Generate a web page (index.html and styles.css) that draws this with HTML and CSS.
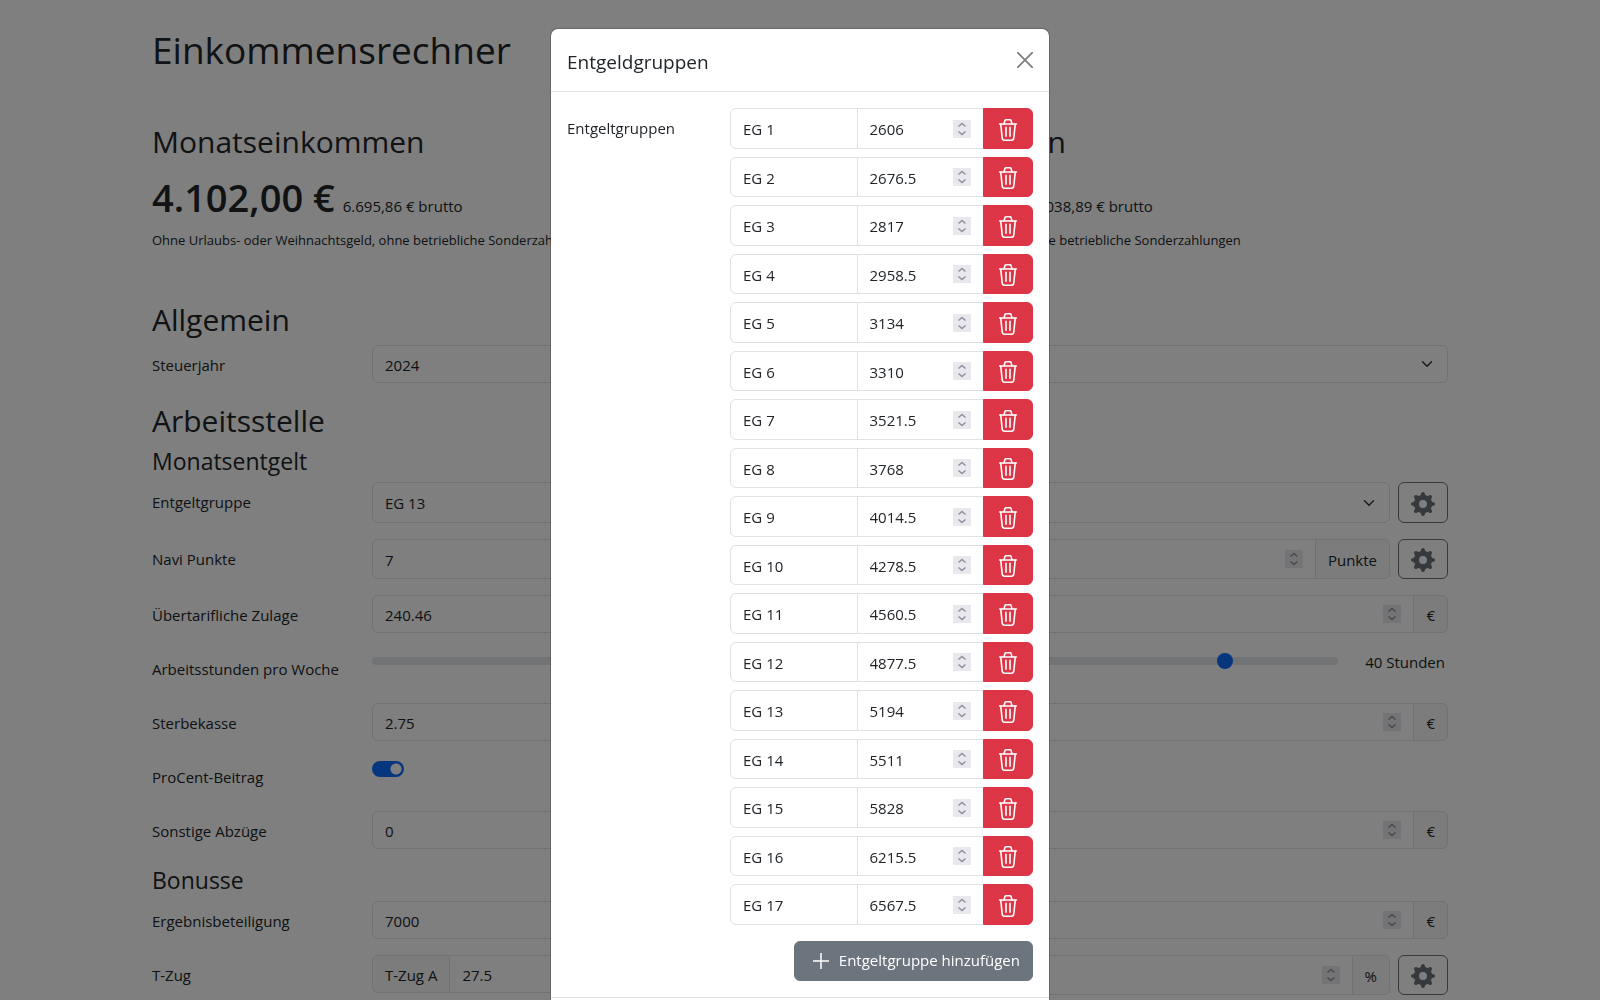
FILE: index.html
```
<!DOCTYPE html>
<html lang="de">
<head>
<meta charset="utf-8">
<meta name="viewport" content="width=device-width, initial-scale=1">
<title>Einkommensrechner</title>
<link rel="stylesheet" href="styles.css">
</head>
<body>
<svg class="sprite" aria-hidden="true">
  <symbol id="trash" viewBox="0 0 24 24">
    <g fill="none" stroke="currentColor" stroke-width="1.6" stroke-linecap="round" stroke-linejoin="round">
      <path d="M3.6 6h16.8"/>
      <path d="M8 5.8 9 2.4q.2-.7 1-.7h4q.8 0 1 .7L16 5.8"/>
      <path d="M4.8 6.4 6.2 20q.2 2.200 2.400 2.200h6.800q2.200 0 2.400-2.200L19.200 6.400"/>
      <path d="M10 9.200v9M14 9.200v9"/>
    </g>
  </symbol>
  <symbol id="gear" viewBox="-12 -12 24 24">
    <circle r="6.500" fill="none" stroke="currentColor" stroke-width="5"/>
    <g fill="currentColor">
      <path id="tooth" d="M-3.600-8Q-2-8.800-1.800-10.400Q-1.600-12 0-12T1.800-10.400Q2-8.800 3.600-8Z"/>
      <use href="#tooth" transform="rotate(45)"/><use href="#tooth" transform="rotate(90)"/>
      <use href="#tooth" transform="rotate(135)"/><use href="#tooth" transform="rotate(180)"/>
      <use href="#tooth" transform="rotate(225)"/><use href="#tooth" transform="rotate(270)"/>
      <use href="#tooth" transform="rotate(315)"/>
    </g>
  </symbol>
  <symbol id="plus" viewBox="0 0 24 24"><path d="M12 5v16M4 13h16" fill="none" stroke="currentColor" stroke-width="1.500"/></symbol>
  <symbol id="close" viewBox="0 0 16 16"><path d="M.7.7l14.600 14.600M15.300.7.7 15.300" fill="none" stroke="currentColor" stroke-width="1.800" stroke-linecap="round"/></symbol>
</svg>

<main class="container">
  <h1>Einkommensrechner</h1>
  <div class="summary">
    <section>
      <h2>Monatseinkommen</h2>
      <div class="amount"><strong>4.102,00 €</strong> <span>6.695,86 € brutto</span></div>
      <small>Ohne Urlaubs- oder Weihnachtsgeld, ohne betriebliche Sonderzahlungen</small>
    </section>
    <section>
      <h2>Jahreseinkommen</h2>
      <div class="amount"><strong>54.263,12 €</strong> <span>89.038,89 € brutto</span></div>
      <small>Mit Urlaubs- oder Weihnachtsgeld, ohne betriebliche Sonderzahlungen</small>
    </section>
  </div>

  <h2>Allgemein</h2>
  <div class="row">
    <label for="jahr">Steuerjahr</label>
    <select id="jahr" class="control select"><option>2024</option></select>
  </div>

  <h2>Arbeitsstelle</h2>
  <h3>Monatsentgelt</h3>
  <div class="row">
    <label for="eg">Entgeltgruppe</label>
    <div class="fields tall">
      <select id="eg" class="control select"><option>EG 13</option></select>
      <button type="button" class="btn gear" aria-label="Entgeltgruppen bearbeiten"><svg class="icon"><use href="#gear"/></svg></button>
    </div>
  </div>
  <div class="row">
    <label for="navi">Navi Punkte</label>
    <div class="fields mid">
      <div class="group"><input id="navi" class="control" type="number" value="7"><span class="addon">Punkte</span></div>
      <button type="button" class="btn gear" aria-label="Navi Punkte bearbeiten"><svg class="icon"><use href="#gear"/></svg></button>
    </div>
  </div>
  <div class="row">
    <label for="zulage">Übertarifliche Zulage</label>
    <div class="group"><input id="zulage" class="control" type="number" step="any" value="240.46"><span class="addon">€</span></div>
  </div>
  <div class="row">
    <label for="stunden">Arbeitsstunden pro Woche</label>
    <div class="slider"><input id="stunden" type="range" min="0" max="45" step="0.5" value="40"><output for="stunden">40 Stunden</output></div>
  </div>
  <div class="row">
    <label for="sterbe">Sterbekasse</label>
    <div class="group"><input id="sterbe" class="control" type="number" step="any" value="2.75"><span class="addon">€</span></div>
  </div>
  <div class="row">
    <label for="procent">ProCent-Beitrag</label>
    <input id="procent" class="switch" type="checkbox" role="switch" checked>
  </div>
  <div class="row">
    <label for="abzug">Sonstige Abzüge</label>
    <div class="group"><input id="abzug" class="control" type="number" value="0"><span class="addon">€</span></div>
  </div>

  <h3>Bonusse</h3>
  <div class="row">
    <label for="erfolg">Ergebnisbeteiligung</label>
    <div class="group"><input id="erfolg" class="control" type="number" value="7000"><span class="addon">€</span></div>
  </div>
  <div class="row">
    <label for="tzug">T-Zug</label>
    <div class="pair">
      <div class="group"><span class="addon">T-Zug A</span><input id="tzug" class="control" type="number" step="any" value="27.5"></div>
      <div class="fields mid">
        <div class="group"><input class="control" type="number" step="any" aria-label="T-Zug B"><span class="addon">%</span></div>
        <button type="button" class="btn gear" aria-label="T-Zug bearbeiten"><svg class="icon"><use href="#gear"/></svg></button>
      </div>
    </div>
  </div>
</main>

<div class="backdrop">
  <div class="modal" role="dialog" aria-modal="true" aria-labelledby="titel">
    <header class="modal-header">
      <h2 id="titel" class="modal-title">Entgeldgruppen</h2>
      <button type="button" class="close" aria-label="Schließen"><svg><use href="#close"/></svg></button>
    </header>
    <div class="modal-body">
      <span class="modal-label">Entgeltgruppen</span>
      <div class="groups">
        <div class="group"><input class="control" value="EG 1" aria-label="Name"><input class="control" type="number" value="2606" aria-label="Entgelt"><button type="button" class="btn delete" aria-label="Löschen"><svg class="icon"><use href="#trash"/></svg></button></div>
        <div class="group"><input class="control" value="EG 2" aria-label="Name"><input class="control" type="number" step="any" value="2676.5" aria-label="Entgelt"><button type="button" class="btn delete" aria-label="Löschen"><svg class="icon"><use href="#trash"/></svg></button></div>
        <div class="group"><input class="control" value="EG 3" aria-label="Name"><input class="control" type="number" value="2817" aria-label="Entgelt"><button type="button" class="btn delete" aria-label="Löschen"><svg class="icon"><use href="#trash"/></svg></button></div>
        <div class="group"><input class="control" value="EG 4" aria-label="Name"><input class="control" type="number" step="any" value="2958.5" aria-label="Entgelt"><button type="button" class="btn delete" aria-label="Löschen"><svg class="icon"><use href="#trash"/></svg></button></div>
        <div class="group"><input class="control" value="EG 5" aria-label="Name"><input class="control" type="number" value="3134" aria-label="Entgelt"><button type="button" class="btn delete" aria-label="Löschen"><svg class="icon"><use href="#trash"/></svg></button></div>
        <div class="group"><input class="control" value="EG 6" aria-label="Name"><input class="control" type="number" value="3310" aria-label="Entgelt"><button type="button" class="btn delete" aria-label="Löschen"><svg class="icon"><use href="#trash"/></svg></button></div>
        <div class="group"><input class="control" value="EG 7" aria-label="Name"><input class="control" type="number" step="any" value="3521.5" aria-label="Entgelt"><button type="button" class="btn delete" aria-label="Löschen"><svg class="icon"><use href="#trash"/></svg></button></div>
        <div class="group"><input class="control" value="EG 8" aria-label="Name"><input class="control" type="number" value="3768" aria-label="Entgelt"><button type="button" class="btn delete" aria-label="Löschen"><svg class="icon"><use href="#trash"/></svg></button></div>
        <div class="group"><input class="control" value="EG 9" aria-label="Name"><input class="control" type="number" step="any" value="4014.5" aria-label="Entgelt"><button type="button" class="btn delete" aria-label="Löschen"><svg class="icon"><use href="#trash"/></svg></button></div>
        <div class="group"><input class="control" value="EG 10" aria-label="Name"><input class="control" type="number" step="any" value="4278.5" aria-label="Entgelt"><button type="button" class="btn delete" aria-label="Löschen"><svg class="icon"><use href="#trash"/></svg></button></div>
        <div class="group"><input class="control" value="EG 11" aria-label="Name"><input class="control" type="number" step="any" value="4560.5" aria-label="Entgelt"><button type="button" class="btn delete" aria-label="Löschen"><svg class="icon"><use href="#trash"/></svg></button></div>
        <div class="group"><input class="control" value="EG 12" aria-label="Name"><input class="control" type="number" step="any" value="4877.5" aria-label="Entgelt"><button type="button" class="btn delete" aria-label="Löschen"><svg class="icon"><use href="#trash"/></svg></button></div>
        <div class="group"><input class="control" value="EG 13" aria-label="Name"><input class="control" type="number" value="5194" aria-label="Entgelt"><button type="button" class="btn delete" aria-label="Löschen"><svg class="icon"><use href="#trash"/></svg></button></div>
        <div class="group"><input class="control" value="EG 14" aria-label="Name"><input class="control" type="number" value="5511" aria-label="Entgelt"><button type="button" class="btn delete" aria-label="Löschen"><svg class="icon"><use href="#trash"/></svg></button></div>
        <div class="group"><input class="control" value="EG 15" aria-label="Name"><input class="control" type="number" value="5828" aria-label="Entgelt"><button type="button" class="btn delete" aria-label="Löschen"><svg class="icon"><use href="#trash"/></svg></button></div>
        <div class="group"><input class="control" value="EG 16" aria-label="Name"><input class="control" type="number" step="any" value="6215.5" aria-label="Entgelt"><button type="button" class="btn delete" aria-label="Löschen"><svg class="icon"><use href="#trash"/></svg></button></div>
        <div class="group"><input class="control" value="EG 17" aria-label="Name"><input class="control" type="number" step="any" value="6567.5" aria-label="Entgelt"><button type="button" class="btn delete" aria-label="Löschen"><svg class="icon"><use href="#trash"/></svg></button></div>
      </div>
      <button type="button" class="btn add"><svg class="icon"><use href="#plus"/></svg>Entgeltgruppe hinzufügen</button>
    </div>
    <footer class="modal-footer"></footer>
  </div>
</div>
</body>
</html>
```
FILE: styles.css
```
*, *::before, *::after { box-sizing: border-box; }

body {
  margin: 0;
  height: 100vh;
  overflow: hidden;
  background: #fff;
  color: #212529;
  font: 15px/24px "Open Sans", "Noto Sans", sans-serif;
}

h1, h2, h3 { margin: 0; font-weight: 400; }
h1 { padding-top: 26px; font-size: 37px; line-height: 48px; }
h2 { margin-bottom: 6px; padding-top: 3px; font-size: 30px; line-height: 38px; }
h3 { margin-bottom: 7px; padding-top: 1px; font-size: 23px; line-height: 28px; }

input, select, button { margin: 0; font: inherit; color: inherit; }
.sprite { position: absolute; width: 0; height: 0; }
.icon { flex: none; display: block; width: 24px; height: 24px; }

.container { max-width: 1320px; margin: 0 auto; padding: 0 12px; }

.summary {
  display: grid;
  grid-template-columns: 1fr 1fr;
  gap: 24px;
  margin: 46px 0;
}
.amount { display: flex; align-items: baseline; gap: 8px; height: 61px; }
.amount strong { font-size: 38px; font-weight: 600; line-height: 61px; }
.summary small { display: block; font-size: 13px; }

.row {
  display: grid;
  grid-template-columns: calc((100% + 24px) / 6) 1fr;
  align-items: start;
  min-height: 38px;
  margin-bottom: 16px;
}
.row > label { padding-top: 8px; }

.control {
  flex: 1;
  width: 100%;
  min-width: 0;
  height: 38px;
  padding: 6px 12px 5px;
  border: 1px solid #dee2e6;
  border-radius: 6px;
  background: #fff;
  outline: 0;
}
.select {
  appearance: none;
  padding-right: 36px;
  background: #fff url("data:image/svg+xml,%3Csvg xmlns='http://www.w3.org/2000/svg' viewBox='0 0 16 16'%3E%3Cpath fill='none' stroke='%23343a40' stroke-linecap='round' stroke-linejoin='round' stroke-width='2' d='m2 5 6 6 6-6'/%3E%3C/svg%3E") no-repeat right 12px center / 16px 12px;
}
.control[type="number"] {
  appearance: textfield;
  background: #fff url("data:image/svg+xml,%3Csvg xmlns='http://www.w3.org/2000/svg' viewBox='0 0 18 18'%3E%3Crect width='18' height='18' fill='%23e9e9ed'/%3E%3Cpath fill='none' stroke='%238f8f9d' stroke-width='1.5' d='m5.500 6.500 3.500-3 3.500 3M5.500 11.500l3.500 3 3.500-3'/%3E%3C/svg%3E") no-repeat right 12px center / 18px 18px;
}
.control[type="number"]::-webkit-inner-spin-button { display: none; }

.group { display: flex; flex: 1; min-width: 0; }
.group > * { height: auto; min-height: 38px; }
.group > :not(:first-child) { margin-left: -1px; border-top-left-radius: 0; border-bottom-left-radius: 0; }
.group > :not(:last-child) { border-top-right-radius: 0; border-bottom-right-radius: 0; }
.addon {
  display: flex;
  align-items: center;
  padding: 1px 12px 0;
  border: 1px solid #dee2e6;
  border-radius: 6px;
  background: #f8f9fa;
}

.fields { display: flex; gap: 8px; }
.tall { height: 41px; }
.mid { height: 40px; }
.fields .control { height: auto; }
.pair { display: grid; grid-template-columns: 1fr 1fr; gap: 24px; align-items: start; }

.btn {
  display: flex;
  justify-content: center;
  align-items: flex-end;
  width: 50px;
  padding: 0 0 6px;
  border: 1px solid;
  border-radius: 6px;
}
.gear { border-color: #6c757d; background: transparent; color: #6c757d; }
.delete { border-color: #dc3545; background: #dc3545; color: #fff; }
.group > .delete { flex: none; }

.slider { display: flex; gap: 27px; padding-right: 3px; }
.slider input {
  flex: 1;
  min-width: 0;
  height: 24px;
  appearance: none;
  background: transparent;
}
.slider input::-webkit-slider-runnable-track { height: 8px; border-radius: 8px; background: #e4e7ea; }
.slider input::-webkit-slider-thumb {
  appearance: none;
  width: 16px;
  height: 16px;
  margin-top: -4px;
  border-radius: 50%;
  background: #0d6efd;
}
.slider output { padding-top: 1px; }

.switch {
  appearance: none;
  width: 32px;
  height: 16px;
  margin-top: 4px;
  border-radius: 16px;
  background: #0d6efd radial-gradient(circle at 24px 8px, #fff 5px, transparent 6px);
}

.backdrop {
  position: fixed;
  inset: 0;
  overflow: hidden;
  padding: 28px 16px;
  background: rgb(0 0 0 / 50%);
}
.modal {
  max-width: 500px;
  margin: 0 auto;
  border: 1px solid rgb(0 0 0 / 18%);
  border-radius: 8px;
  background: #fff;
  background-clip: padding-box;
}
.modal-header {
  display: flex;
  justify-content: space-between;
  align-items: center;
  padding: 16px;
  border-bottom: 1px solid #dee2e6;
}
.modal-title { margin: 0; padding-top: 4px; font-size: 19px; line-height: 26px; }
.close { display: flex; padding: 0; border: 0; background: none; color: #000; opacity: .5; }
.close svg { width: 16px; height: 16px; }
.modal-body {
  display: grid;
  grid-template-columns: 163px 1fr;
  row-gap: 16px;
  padding: 16px;
}
.modal-label { padding-top: 8px; }
.groups { display: grid; grid-auto-rows: 41px 40px; gap: 8px; }
.add {
  grid-column: 2;
  justify-self: end;
  align-items: center;
  gap: 6px;
  width: auto;
  height: 40px;
  padding: 0 12px 2px 14px;
  border-color: #6c757d;
  background: #6c757d;
  color: #fff;
}
.modal-footer { height: 70px; border-top: 1px solid #dee2e6; }
```
